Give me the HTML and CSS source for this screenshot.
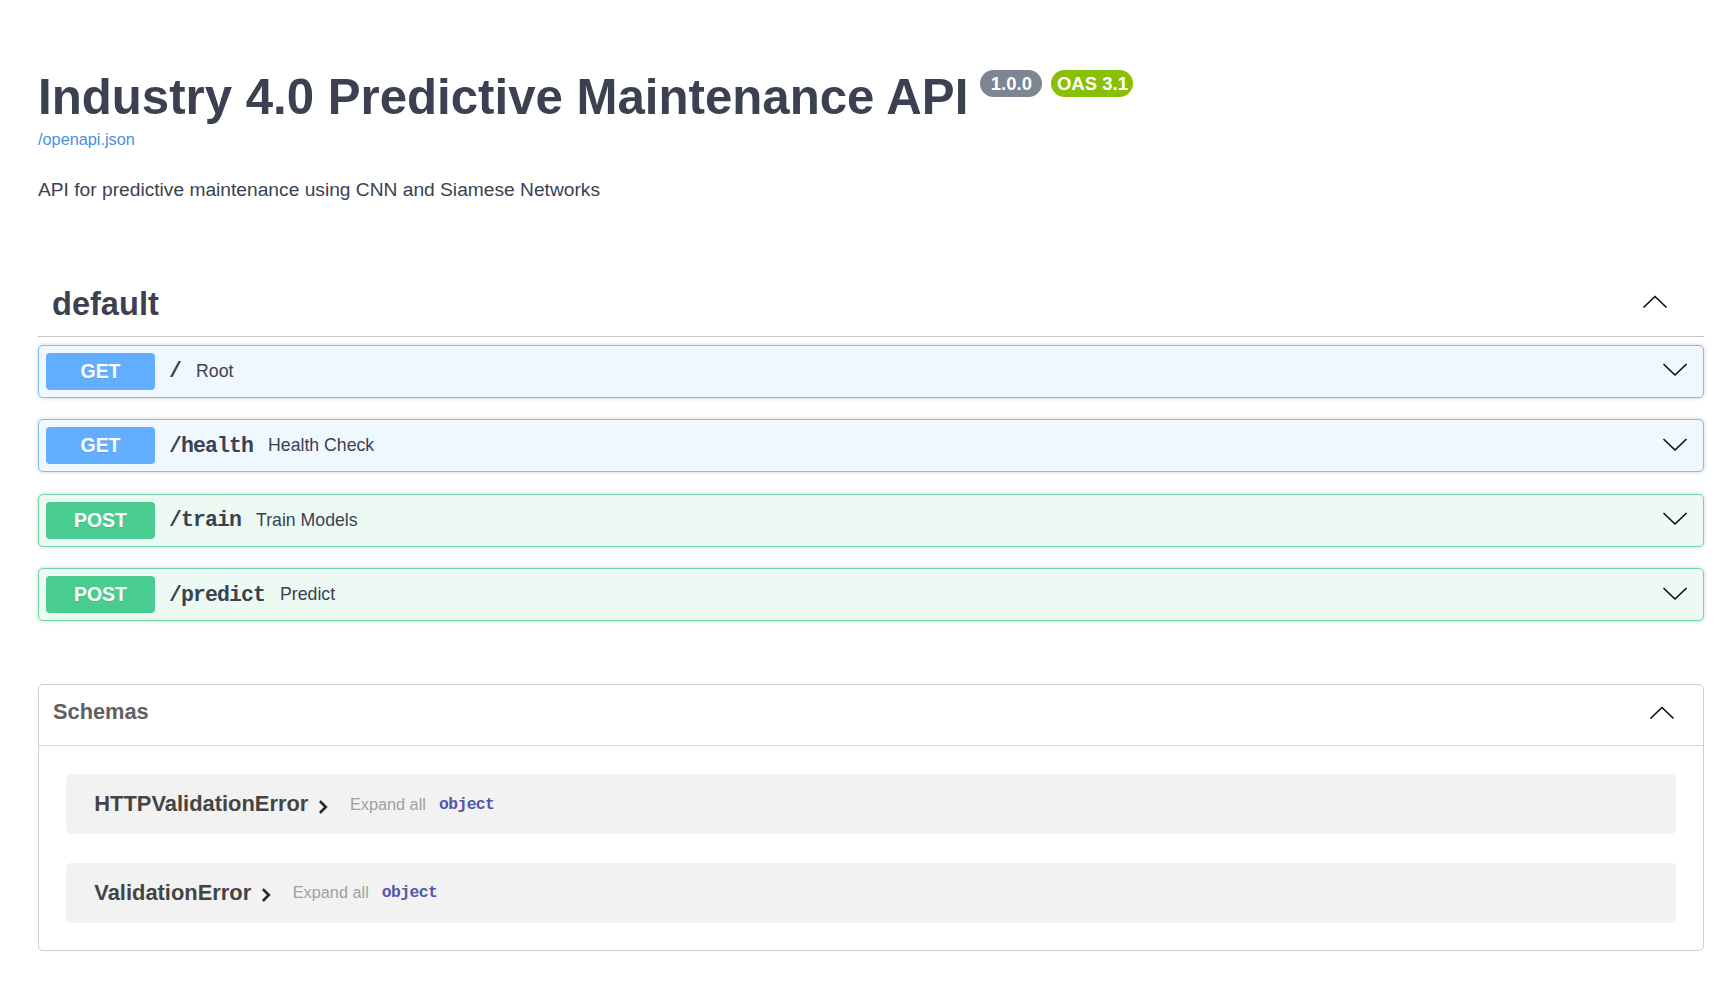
FILE: index.html
```html
<!DOCTYPE html>
<html lang="en">
<head>
<meta charset="utf-8">
<title>Industry 4.0 Predictive Maintenance API - Swagger UI</title>
<link rel="stylesheet" href="styles.css">
</head>
<body>
<div class="wrapper">
  <section class="info">
    <div class="title-row">
      <h2 class="title">Industry 4.0 Predictive Maintenance API</h2>
      <span class="badge badge-version">1.0.0</span>
      <span class="badge badge-oas">OAS 3.1</span>
    </div>
    <a class="spec-link" href="#">/openapi.json</a>
    <p class="description">API for predictive maintenance using CNN and Siamese Networks</p>
  </section>

  <section class="tag-section">
    <h3 class="tag-header">
      <span class="tag-name">default</span>
      <svg class="chev chev-tag" width="24" height="13" viewBox="0 0 24 13"><polyline points="1,12 12,1.5 23,12" fill="none" stroke="#111" stroke-width="1.7" stroke-linecap="round" stroke-linejoin="round"/></svg>
    </h3>

    <div class="opblock opblock-get">
      <span class="method">GET</span>
      <span class="path">/</span>
      <span class="summary-desc">Root</span>
      <svg class="chev chev-op" width="24" height="13" viewBox="0 0 24 13"><polyline points="1,1.5 12,12 23,1.5" fill="none" stroke="#111" stroke-width="1.7" stroke-linecap="round" stroke-linejoin="round"/></svg>
    </div>

    <div class="opblock opblock-get">
      <span class="method">GET</span>
      <span class="path">/health</span>
      <span class="summary-desc">Health Check</span>
      <svg class="chev chev-op" width="24" height="13" viewBox="0 0 24 13"><polyline points="1,1.5 12,12 23,1.5" fill="none" stroke="#111" stroke-width="1.7" stroke-linecap="round" stroke-linejoin="round"/></svg>
    </div>

    <div class="opblock opblock-post">
      <span class="method">POST</span>
      <span class="path">/train</span>
      <span class="summary-desc">Train Models</span>
      <svg class="chev chev-op" width="24" height="13" viewBox="0 0 24 13"><polyline points="1,1.5 12,12 23,1.5" fill="none" stroke="#111" stroke-width="1.7" stroke-linecap="round" stroke-linejoin="round"/></svg>
    </div>

    <div class="opblock opblock-post">
      <span class="method">POST</span>
      <span class="path">/predict</span>
      <span class="summary-desc">Predict</span>
      <svg class="chev chev-op" width="24" height="13" viewBox="0 0 24 13"><polyline points="1,1.5 12,12 23,1.5" fill="none" stroke="#111" stroke-width="1.7" stroke-linecap="round" stroke-linejoin="round"/></svg>
    </div>
  </section>

  <section class="models">
    <h4 class="models-header">
      <span>Schemas</span>
      <svg class="chev chev-models" width="24" height="13" viewBox="0 0 24 13"><polyline points="1,12 12,1.5 23,12" fill="none" stroke="#111" stroke-width="1.7" stroke-linecap="round" stroke-linejoin="round"/></svg>
    </h4>

    <div class="model-container">
      <span class="model-title">HTTPValidationError</span>
      <svg class="model-toggle" width="26" height="26" viewBox="0 0 24 24"><path d="M10 6 8.59 7.41 13.17 12l-4.58 4.59L10 18l6-6z" fill="#222" stroke="#222" stroke-width="0.5"/></svg>
      <span class="expand-all">Expand all</span>
      <span class="prop-type">object</span>
    </div>

    <div class="model-container">
      <span class="model-title">ValidationError</span>
      <svg class="model-toggle" width="26" height="26" viewBox="0 0 24 24"><path d="M10 6 8.59 7.41 13.17 12l-4.58 4.59L10 18l6-6z" fill="#222" stroke="#222" stroke-width="0.5"/></svg>
      <span class="expand-all">Expand all</span>
      <span class="prop-type">object</span>
    </div>
  </section>
</div>
</body>
</html>
```

FILE: styles.css
```css
* {
  box-sizing: border-box;
}

html,
body {
  margin: 0;
  padding: 0;
  background: #fff;
}

body {
  font-family: "Liberation Sans", Arial, sans-serif;
  color: #3b4151;
}

.wrapper {
  padding: 0 18px 0 38px;
}

/* ---------- info ---------- */
.info {
  padding-top: 69px;
}

.title-row {
  display: flex;
  align-items: flex-start;
}

.title {
  margin: 0;
  font-size: 49.2px;
  line-height: 56px;
  font-weight: 700;
  color: #3b4151;
}

.badge {
  margin-top: 1px;
  padding: 3px 10.5px;
  border-radius: 14px;
  font-size: 18.5px;
  line-height: 21px;
  font-weight: 700;
  color: #fff;
  white-space: nowrap;
}

.badge-version {
  margin-left: 12px;
  background: #7d8492;
}

.badge-oas {
  margin-left: 9px;
  padding: 3px 5.5px;
  background: #89bf04;
}

.spec-link {
  display: block;
  margin-top: 4.4px;
  font-size: 16.3px;
  line-height: 20px;
  color: #4990e2;
  text-decoration: none;
  width: max-content;
}

.description {
  margin: 30px 0 0;
  font-size: 19.2px;
  line-height: 22px;
  color: #3b4151;
}

/* ---------- tag section ---------- */
.tag-header {
  margin: 69.6px 0 0;
  padding: 14px 37px 14px 14px;
  display: flex;
  align-items: flex-start;
  justify-content: space-between;
  border-bottom: 1px solid rgba(59, 65, 81, 0.3);
  font-size: 32.6px;
  line-height: 37px;
  font-weight: 700;
  color: #3b4151;
}

.chev {
  display: block;
  flex: none;
}

.chev-tag {
  margin-top: 10px;
}

.opblock {
  display: flex;
  align-items: center;
  margin: 8px 0 0;
  padding: 7px;
  border: 1px solid;
  border-radius: 5px;
  box-shadow: 0 0 4px rgba(0, 0, 0, 0.19);
}

.opblock + .opblock {
  margin-top: 21.5px;
}

.opblock-get {
  background: #eff7ff;
  border-color: #7dbcfc;
}

.opblock-post {
  background: #edfaf4;
  border-color: #6fd6a6;
}

.method {
  flex: none;
  width: 109px;
  height: 37px;
  display: flex;
  align-items: center;
  justify-content: center;
  border-radius: 4px;
  font-size: 19.4px;
  font-weight: 700;
  color: #fff;
  text-shadow: 0 1px 0 rgba(0, 0, 0, 0.1);
}

.opblock-get .method {
  background: #61affe;
}

.opblock-post .method {
  background: #49cc90;
}

.path {
  padding: 0 15px 0 14px;
  font-family: "Liberation Mono", "DejaVu Sans Mono", monospace;
  font-size: 21.5px;
  letter-spacing: -0.9px;
  font-weight: 700;
  color: #3b4151;
}

.summary-desc {
  flex: 1 1 auto;
  font-size: 17.7px;
  color: #3b4151;
}

.chev-op {
  margin: 0 9px 3px 0;
}

/* ---------- models ---------- */
.models {
  margin-top: 62.5px;
  padding-bottom: 27.5px;
  border: 1px solid rgba(59, 65, 81, 0.25);
  border-radius: 5px;
}

.models-header {
  margin: 0;
  height: 61px;
  padding: 14px 29px 0 14px;
  display: flex;
  align-items: flex-start;
  justify-content: space-between;
  border-bottom: 1px solid rgba(59, 65, 81, 0.2);
  font-size: 21.8px;
  line-height: 26px;
  font-weight: 700;
  color: #606060;
}

.chev-models {
  margin-top: 7.5px;
}

.model-container {
  display: flex;
  align-items: center;
  height: 60px;
  margin: 28.3px 27px 0 27.3px;
  padding-left: 28px;
  border-radius: 5px;
  background: #f2f2f2;
}

.model-title {
  font-size: 21.9px;
  font-weight: 700;
  color: #444;
}

.model-toggle {
  display: block;
  flex: none;
  margin: 5.4px 0 0 1.5px;
}

.expand-all {
  margin-left: 14px;
  font-size: 16.3px;
  color: #a0a0a0;
}

.prop-type {
  margin-left: 13px;
  font-family: "Liberation Mono", "DejaVu Sans Mono", monospace;
  font-size: 16.4px;
  letter-spacing: -0.6px;
  font-weight: 700;
  color: #55a;
}
```
